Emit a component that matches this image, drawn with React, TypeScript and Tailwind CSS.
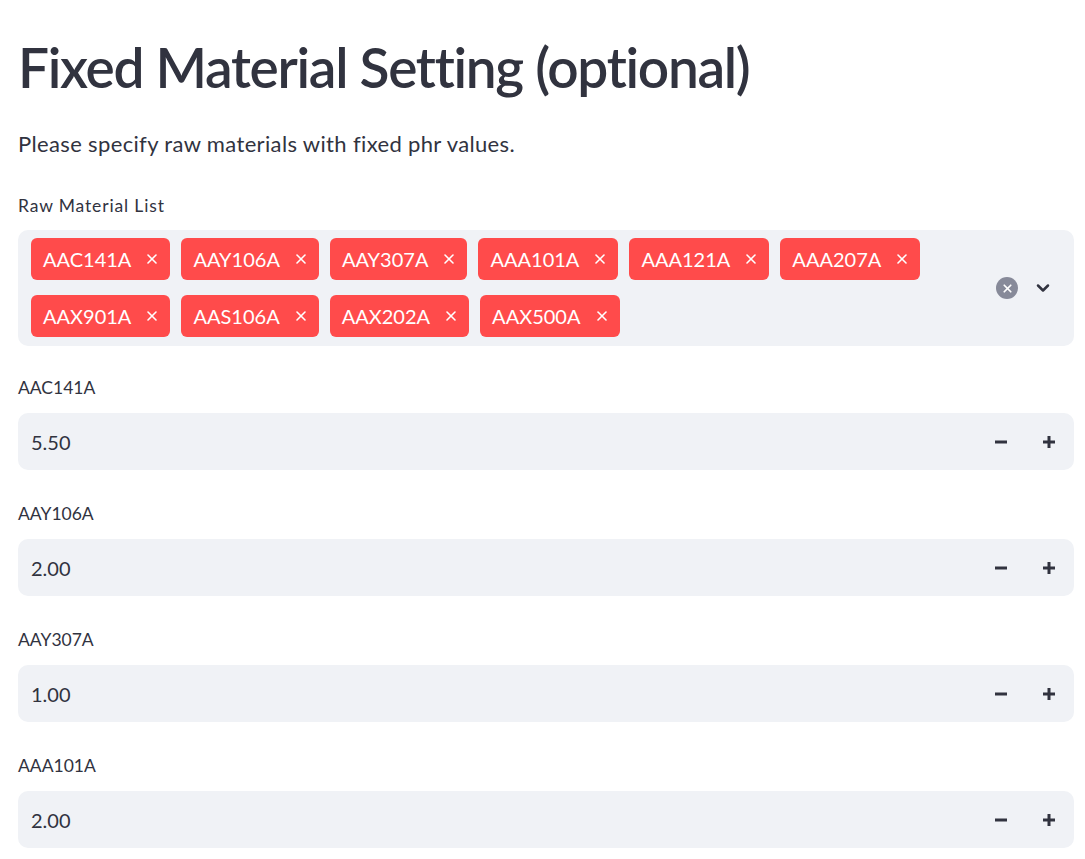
import { X, ChevronDown } from "lucide-react";

const materials = [
  "AAC141A",
  "AAY106A",
  "AAY307A",
  "AAA101A",
  "AAA121A",
  "AAA207A",
  "AAX901A",
  "AAS106A",
  "AAX202A",
  "AAX500A",
];

const values = [
  { name: "AAC141A", value: "5.50" },
  { name: "AAY106A", value: "2.00" },
  { name: "AAY307A", value: "1.00" },
  { name: "AAA101A", value: "2.00" },
];

function MinusIcon() {
  return (
    <svg width="12" height="12" viewBox="0 0 12 12">
      <rect x="0" y="4.5" width="12" height="3" fill="currentColor" />
    </svg>
  );
}

function PlusIcon() {
  return (
    <svg width="12" height="12" viewBox="0 0 12 12">
      <rect x="0" y="4.5" width="12" height="3" fill="currentColor" />
      <rect x="4.5" y="0" width="3" height="12" fill="currentColor" />
    </svg>
  );
}

export default function App() {
  return (
    <div
      className="min-h-screen bg-white text-[#31333f] pl-[18px] pr-[11px]"
      style={{ fontFamily: "Lato, 'Noto Sans', sans-serif" }}
    >
      <h1 className="pt-[33px] text-[55px] leading-[68px] font-semibold tracking-[-1.3px]">
        Fixed Material Setting (optional)
      </h1>
      <p className="mt-[27px] text-[22px] leading-[32px] tracking-[0.35px]">
        Please specify raw materials with fixed phr values.
      </p>

      <div className="mt-[32px] text-[17.5px] leading-[28px] tracking-[0.85px]">Raw Material List</div>
      <div className="mt-[10px] flex items-start rounded-[10px] bg-[#f0f2f6] py-[8px] pl-[13px] pr-[21px]">
        <div className="flex flex-1 flex-wrap gap-x-[11px] gap-y-[15px] pr-[60px]">
          {materials.map((m) => (
            <span
              key={m}
              className="flex h-[42px] items-center gap-[13px] rounded-[6px] bg-[#ff4b4b] pl-[12px] pr-[10px] text-[20px] text-white"
            >
              {m}
              <X className="h-[16px] w-[16px]" strokeWidth={2.4} />
            </span>
          ))}
        </div>
        <div className="flex h-[100px] items-center gap-[15px]">
          <span className="flex h-[22px] w-[22px] items-center justify-center rounded-full bg-[#878a99]">
            <X className="h-[13px] w-[13px] text-white" strokeWidth={3.2} />
          </span>
          <ChevronDown className="h-[20px] w-[20px] text-[#31333f]" strokeWidth={3} />
        </div>
      </div>

      <div className="mt-[28px] flex flex-col gap-[30px]">
        {values.map((v) => (
          <div key={v.name}>
            <div className="text-[17.5px] leading-[28px]">{v.name}</div>
            <div className="mt-[11px] flex h-[57px] items-center rounded-[10px] bg-[#f0f2f6] pl-[13px] pr-[1px]">
              <span className="flex-1 text-[20px]">{v.value}</span>
              <span className="flex w-[48px] justify-center text-[#31333f]">
                <MinusIcon />
              </span>
              <span className="flex w-[48px] justify-center text-[#31333f]">
                <PlusIcon />
              </span>
            </div>
          </div>
        ))}
      </div>
    </div>
  );
}
